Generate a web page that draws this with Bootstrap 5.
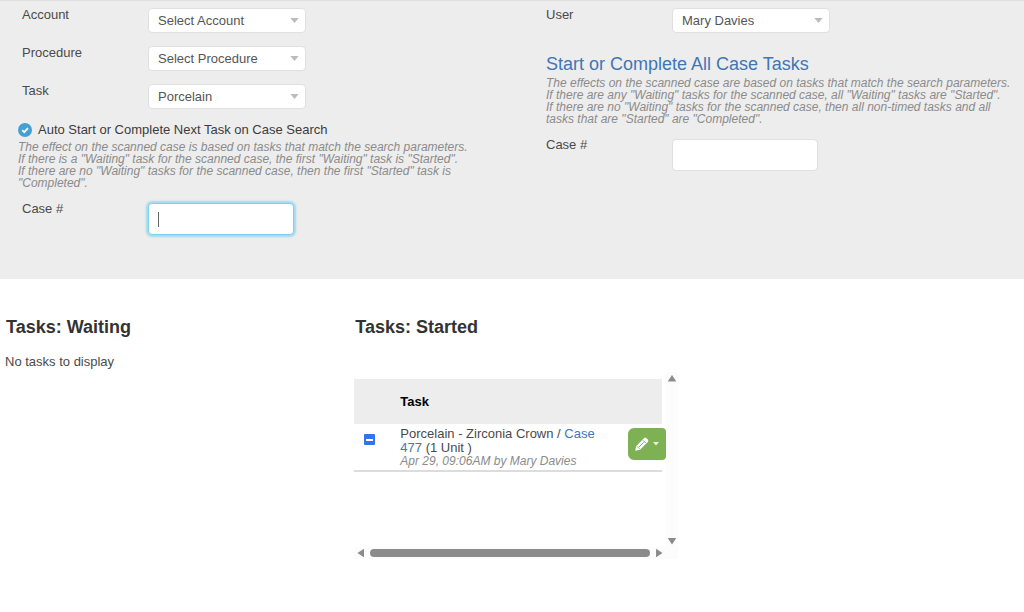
<!DOCTYPE html>
<html lang="en">
<head>
<meta charset="utf-8">
<meta name="viewport" content="width=device-width, initial-scale=1">
<title>Case Tasks</title>
<link href="https://cdn.jsdelivr.net/npm/bootstrap@5.3.0/dist/css/bootstrap.min.css" rel="stylesheet">
<style>
  body { font-family: "Liberation Sans", Arial, sans-serif; font-size: 13px; line-height: 20px; color: #4a4a4a; background: #fff; }
  a { color: #3f76b5; text-decoration: none; }
  .search-panel { background: #ededed; border-top: 1px solid #dfdfdf; padding: 4px 0 44px 18px; }
  .search-right { padding-left: 25px; }
  .field-label { width: 126px; flex: none; }
  .search-left { padding-left: 4px; }
  .fields { gap: 10px; }
  .field-select { width: 158px; height: 25px; margin-top: 3px; padding: 0 24px 0 9px; font-size: 13px; line-height: 20px; color: #555; border: 1px solid #e0e0e0; border-radius: 4px;
    background: #fff url("data:image/svg+xml,%3Csvg xmlns='http://www.w3.org/2000/svg' viewBox='0 0 10 6'%3E%3Cpath d='M0 0h10L5 6z' fill='%23bcbcbc'/%3E%3C/svg%3E") no-repeat right 6px center / 9px 5px; }
  .case-input { width: 146px; height: 32px; margin-top: 4px; padding: 4px 10px; font-size: 13px; border: 1px solid #e0e0e0; border-radius: 4px; background-color: #fff; }
  .case-input.active-input { border-color: #7fd0f2; box-shadow: 0 0 2px 2px #a6d8ee; outline: 0;
    background: #fff linear-gradient(#666, #666) no-repeat 9px center / 1px 15px; caret-color: transparent; }
  .auto-row { margin-top: 11px; color: #3c3c3c; }
  .auto-check { width: 14px; height: 14px; margin: 0 6px 0 0; border: 0; border-radius: 50% !important; }
  .auto-check:checked { background: #459fd3 url("data:image/svg+xml,%3Csvg xmlns='http://www.w3.org/2000/svg' viewBox='0 0 14 14'%3E%3Cpath d='M4.2 7.2l2 2 3.8-4' fill='none' stroke='%23fff' stroke-width='1.8'/%3E%3C/svg%3E") center / 14px; }
  .hint { font-size: 12px; line-height: 12px; font-style: italic; color: #8b8b8b; margin: 1px 0 10px; }
  .all-title { font-size: 18px; line-height: 24px; color: #3f76b5; margin: 19px 0 0; font-weight: 400; }
  .list-title { font-size: 18px; line-height: 24px; font-weight: 700; color: #333; margin: 0 0 0 1px; }
  .lists { padding-top: 36px; }
  .waiting { padding-left: 5px; }
  .empty-note { margin: 13px 0 0; }
  .started { padding: 0 5px 0 13px; }
  .scroll-pane { margin-top: 33px; display: grid; grid-template-columns: 1fr 12px; grid-template-rows: 175px 12px; }
  .pane-body { padding: 7px 4px 0 0; }
  .bar-track { background: #fcfcfc; }
  .bar-track svg { display: block; fill: #8b8b8b; }
  .bar-thumb { height: 8px; border-radius: 4px; background: #8b8b8b; }
  .task-table { margin: 0; line-height: 14px; table-layout: fixed; width: 100%; color: #4a4a4a; }
  .task-table th { height: 45px; background: #ededed; color: #000; vertical-align: middle; padding: 0; }
  .task-table td { height: 47px; vertical-align: top; padding: 3px 0 0; border-bottom: 2px solid #dcdcdc; }
  .when { display: block; font-size: 12px; line-height: 13px; font-style: italic; color: #8b8b8b; }
  .pick { display: block; width: 11px; height: 11px; margin: 7px 0 0 10px; border: 0; border-radius: 1px !important; }
  .pick:indeterminate, .pick { background: #2f74f0 linear-gradient(#fff, #fff) no-repeat center / 7px 2px; }
  .edit-btn { width: 38px; height: 32px; margin-top: 1px; padding: 0; background: #7eb153; border-radius: 6px 4px 4px 6px; display: flex; align-items: center; justify-content: center; gap: 3px; }
  .edit-btn:hover { background: #6fa045; }
</style>
</head>
<body>
<form class="search-panel">
  <div class="row g-0">
    <div class="col-6">
      <div class="search-left d-flex flex-column fields">
        <div class="d-flex align-items-start"><label class="field-label" for="account">Account</label>
          <select class="form-select field-select" id="account"><option>Select Account</option></select></div>
        <div class="d-flex align-items-start"><label class="field-label" for="procedure">Procedure</label>
          <select class="form-select field-select" id="procedure"><option>Select Procedure</option></select></div>
        <div class="d-flex align-items-start"><label class="field-label" for="task">Task</label>
          <select class="form-select field-select" id="task"><option>Porcelain</option></select></div>
      </div>
      <div class="auto-row d-flex align-items-center">
        <input class="form-check-input auto-check" type="checkbox" id="auto" checked>
        <label for="auto">Auto Start or Complete Next Task on Case Search</label>
      </div>
      <p class="hint">The effect on the scanned case is based on tasks that match the search parameters.<br>If there is a "Waiting" task for the scanned case, the first "Waiting" task is "Started".<br>If there are no "Waiting" tasks for the scanned case, then the first "Started" task is<br>"Completed".</p>
      <div class="search-left d-flex align-items-start"><label class="field-label" for="case-next">Case #</label>
        <input class="form-control case-input active-input" type="text" id="case-next"></div>
    </div>
    <div class="col-6 search-right">
      <div class="d-flex align-items-start"><label class="field-label" for="user">User</label>
        <select class="form-select field-select" id="user"><option>Mary Davies</option></select></div>
      <h2 class="all-title">Start or Complete All Case Tasks</h2>
      <p class="hint">The effects on the scanned case are based on tasks that match the search parameters.<br>If there are any "Waiting" tasks for the scanned case, all "Waiting" tasks are "Started".<br>If there are no "Waiting" tasks for the scanned case, then all non-timed tasks and all<br>tasks that are "Started" are "Completed".</p>
      <div class="d-flex align-items-start"><label class="field-label" for="case-all">Case #</label>
        <input class="form-control case-input" type="text" id="case-all"></div>
    </div>
  </div>
</form>
<main class="lists row g-0">
  <section class="col-4 waiting">
    <h3 class="list-title">Tasks: Waiting</h3>
    <p class="empty-note">No tasks to display</p>
  </section>
  <section class="col-4 started">
    <h3 class="list-title">Tasks: Started</h3>
    <div class="scroll-pane">
      <div class="pane-body">
        <table class="task-table">
          <colgroup><col style="width:46px"><col><col style="width:34px"></colgroup>
          <thead><tr><th></th><th>Task</th><th></th></tr></thead>
          <tbody><tr>
            <td><input class="form-check-input pick" type="checkbox" aria-label="Select task"></td>
            <td><div class="pe-4">Porcelain - Zirconia Crown / <a href="#">Case 477</a> (1 Unit )<span class="when">Apr 29, 09:06AM by Mary Davies</span></div></td>
            <td><button class="btn edit-btn" type="button" aria-label="Edit task">
              <svg width="16" height="16" viewBox="0 0 16 16"><path d="M1.2 14.8l1-4.8L10 2.2q1.2-1.2 2.400 0l1.400 1.400q1.200 1.200 0 2.400L6 13.800z" fill="#fff"/><path d="M9 4.300L11.700 7M5 11l4.600-4.600M3.300 10.600l2.100 2.100" fill="none" stroke="#7eb153" stroke-width="1"/></svg>
              <svg width="6" height="4" viewBox="0 0 6 4"><path d="M0 0h6L3 3.5z" fill="#e6f1dc"/></svg>
            </button></td>
          </tr></tbody>
        </table>
      </div>
      <div class="bar-track d-flex flex-column justify-content-between">
        <svg width="12" height="12" viewBox="0 0 12 12"><path d="M6 3l4 6q0 .5-.5.5h-7q-.5 0-.5-.5z"/></svg>
        <svg width="12" height="12" viewBox="0 0 12 12"><path d="M6 9.500l4-6q0-.5-.5-.5h-7q-.5 0-.5.5z"/></svg>
      </div>
      <div class="bar-track d-flex align-items-center justify-content-between">
        <svg width="12" height="12" viewBox="0 0 12 12"><path d="M3.5 6l6-4q.5 0 .5.5v7q0 .5-.5.5z"/></svg>
        <div class="bar-thumb flex-grow-1 ms-1 me-1"></div>
        <svg width="12" height="12" viewBox="0 0 12 12"><path d="M8.5 6l-6-4q-.5 0-.5.5v7q0 .5.5.5z"/></svg>
      </div>
      <div class="bar-track"></div>
    </div>
  </section>
</main>
<script src="https://cdn.jsdelivr.net/npm/bootstrap@5.3.0/dist/js/bootstrap.bundle.min.js"></script>
</body>
</html>
